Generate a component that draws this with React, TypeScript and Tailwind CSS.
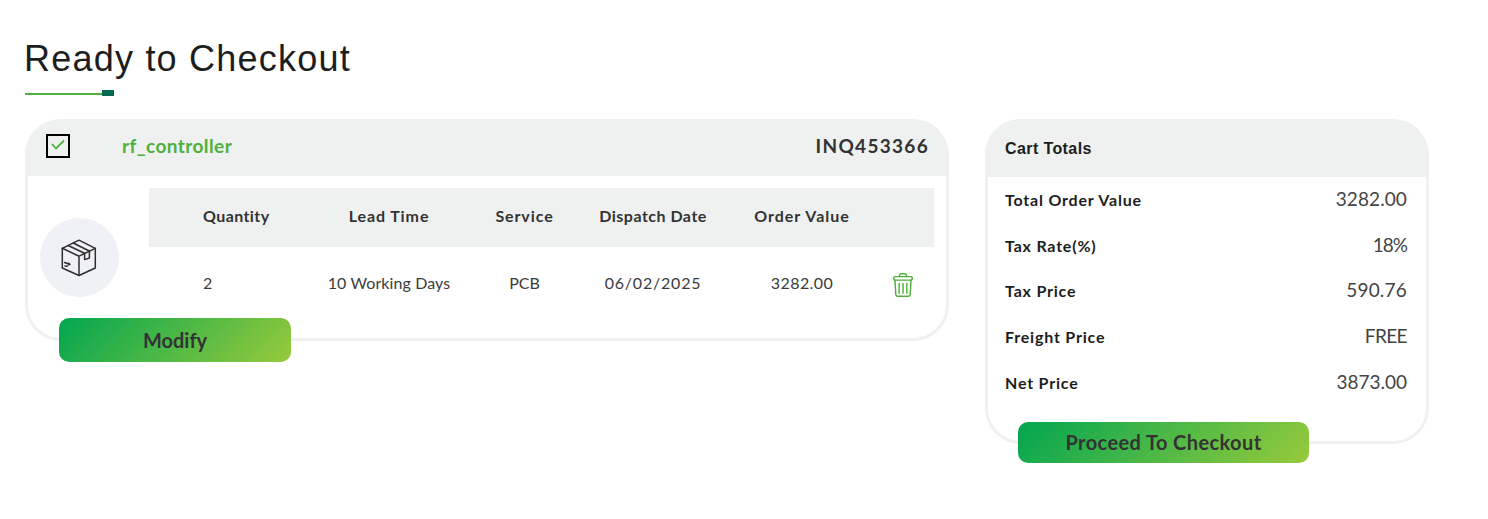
const totals = [
  { label: 'Total Order Value', value: '3282.00', valueClass: 'tracking-[0.1px]' },
  { label: 'Tax Rate(%)', value: '18%', valueClass: 'tracking-[-1px]' },
  { label: 'Tax Price', value: '590.76', valueClass: 'tracking-[0.2px]' },
  { label: 'Freight Price', value: 'FREE', valueClass: 'tracking-[-0.6px]' },
  { label: 'Net Price', value: '3873.00', valueClass: 'tracking-[0px]' },
];

function PackageIcon() {
  return (
    <svg width="36" height="38" viewBox="0 0 36 38" fill="none" stroke="#2f2f33" strokeWidth="1.5" strokeLinejoin="round" strokeLinecap="round" className="-ml-[1px]">
      <path d="M18 1.2 34.3 9.3V29L18 36.5 1.3 29V9.3Z" />
      <path d="M1.3 9.3 18 17.2 34.3 9.3M18 17.2V36.5" />
      <path d="M7.2 6.5 23.5 14.2M12.2 4 28.3 12" />
      <path d="M23.6 14.4V20.6L28.4 19V12" />
      <path d="M3.5 23.5 6.5 24.5M7.5 24.2 9 25.4 7.3 26M4 27 6 27.3" />
    </svg>
  );
}

function TrashIcon() {
  return (
    <svg width="20" height="24" viewBox="0 0 20 24" fill="none" stroke="#4fb03b" strokeWidth="1.45" strokeLinejoin="round" strokeLinecap="round">
      <path d="M6.6 3.5V2.2Q6.6.8 8 .8H12Q13.4.8 13.4 2.2V3.5" />
      <rect x=".8" y="3.6" width="18.4" height="3.5" rx="1" />
      <path d="M2 7.3 2.8 21.8Q2.9 23.2 4.3 23.2H15.7Q17.1 23.2 17.2 21.8L18 7.3" />
      <path d="M6.2 10.4V20.3M10 10.4V20.3M13.8 10.4V20.3" />
    </svg>
  );
}

export default function App() {
  return (
    <main className="h-[519px] w-full overflow-hidden bg-white pl-[25px] pt-[37px] font-['Lato',sans-serif] text-[#333]">
      <h1 className="-ml-[1px] h-[44px] whitespace-nowrap font-['Liberation_Sans',sans-serif] text-[36px] leading-[44px] tracking-[1.22px] text-[#1d1d1d]">Ready to Checkout</h1>
      <div className="mt-[9px] flex h-[6px] items-center">
        <div className="mt-[2px] h-[2px] w-[77px] bg-[#4fb03b]" />
        <div className="h-[6px] w-[12px] bg-[#056b55]" />
      </div>

      <div className="mt-[23px] flex items-start gap-[36px]">
        <section className="h-[222px] w-[924px] rounded-[36px] border-[3px] border-[#eff1f0]">
          <header className="flex h-[54px] items-center rounded-t-[32px] bg-[#eff1f0] pl-[18px] pr-[17px] pb-[7px]">
            <div className="mt-[1px] flex h-[24px] w-[24px] items-center justify-center border-2 border-black">
              <svg width="14" height="12" viewBox="0 0 14 12" fill="none" stroke="#4fb03b" strokeWidth="1.8" className="-mt-[2px]">
                <path d="M1 5 5 9.5 13 1.5" />
              </svg>
            </div>
            <span className="ml-[52px] text-[19px] font-bold leading-[24px] tracking-[0.42px] text-[#4fb03b]">rf_controller</span>
            <span className="ml-auto text-[19px] font-bold leading-[24px] tracking-[1.3px]">INQ453366</span>
          </header>
          <div className="flex pl-[12px] pt-[12px]">
            <div className="mt-[30px] flex h-[79px] w-[79px] items-center justify-center rounded-full bg-[#f0f1f6]">
              <PackageIcon />
            </div>
            <div className="ml-[30px] w-[785px] text-center text-[16px]">
              <div className="grid h-[59px] grid-cols-[163px_154px_117px_140px_158px_44px] items-center bg-[#eff1f0] pb-[3px] font-bold">
                <span className="pl-[54px] text-left tracking-[0.4px]">Quantity</span>
                <span className="tracking-[0.9px]">Lead Time</span>
                <span className="tracking-[0.9px]">Service</span>
                <span className="tracking-[0.5px]">Dispatch Date</span>
                <span className="tracking-[1px]">Order Value</span>
              </div>
              <div className="grid h-[75px] grid-cols-[163px_154px_117px_140px_158px_44px] items-center pb-[3px] text-[#3c3c3c]">
                <span className="pl-[54px] text-left">2</span>
                <span className="tracking-[0.1px]">10 Working Days</span>
                <span>PCB</span>
                <span className="tracking-[0.8px]">06/02/2025</span>
                <span className="tracking-[0.4px]">3282.00</span>
                <span className="flex justify-center pt-[3px]"><TrashIcon /></span>
              </div>
            </div>
          </div>
          <button className="relative -mt-[4px] ml-[31px] block h-[44px] w-[232px] rounded-[10px] bg-[linear-gradient(135deg,#02a651,#98ca3b)] text-[20px] font-bold">Modify</button>
        </section>

        <section className="h-[325px] w-[444px] rounded-[36px] border-[3px] border-[#eff1f0]">
          <header className="flex h-[55px] items-center rounded-t-[32px] bg-[#eff1f0] pl-[17px] pb-[1px] font-['Liberation_Sans',sans-serif] text-[16px] font-bold tracking-[0.4px] text-[#1d1d1d]">Cart Totals</header>
          <dl className="pl-[17px] pr-[19px]">
            {totals.map((row) => (
              <div key={row.label} className="flex h-[45.7px] items-center justify-between">
                <dt className="text-[16px] font-bold tracking-[0.8px] text-[#1d1d1d]">{row.label}</dt>
                <dd className={`-mt-[1px] text-[19px] text-[#444] ${row.valueClass}`}>{row.value}</dd>
              </div>
            ))}
          </dl>
          <button className="relative mt-[16.5px] ml-[30px] block h-[41px] w-[291px] rounded-[10px] bg-[linear-gradient(135deg,#02a651,#98ca3b)] pb-[1px] text-[20px] font-bold tracking-[0.4px]">Proceed To Checkout</button>
        </section>
      </div>
    </main>
  );
}
